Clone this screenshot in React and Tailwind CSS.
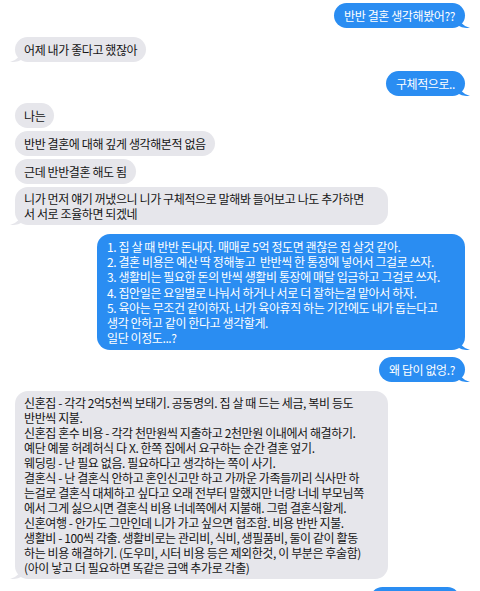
import React from "react";

const font = { fontFamily: '"Noto Sans CJK KR", "Noto Sans", sans-serif' };

function TailRight({ color }) {
  return (
    <svg className="absolute right-[-5px] bottom-0" width="12" height="13" viewBox="0 0 12 13">
      <path d="M0 0 Q1 10 12 13 Q5 13.5 0 10.5 Z" fill={color} />
    </svg>
  );
}

function TailLeft({ color }) {
  return (
    <svg className="absolute left-[-5px] bottom-0" width="12" height="13" viewBox="0 0 12 13">
      <path d="M12 0 Q11 10 0 13 Q7 13.5 12 10.5 Z" fill={color} />
    </svg>
  );
}

function Me({ children, tail = true, className = "" }) {
  return (
    <div className="flex justify-end">
      <div className={"relative rounded-[13px] bg-[#2a8df2] text-white px-[10px] whitespace-nowrap " + className}>
        {children}
        {tail && <TailRight color="#2a8df2" />}
      </div>
    </div>
  );
}

function Them({ children, tail = false, className = "" }) {
  return (
    <div className="flex justify-start">
      <div className={"relative rounded-[13px] bg-[#e6e6eb] text-[#151515] px-[9px] whitespace-nowrap " + className}>
        {children}
        {tail && <TailLeft color="#e6e6eb" />}
      </div>
    </div>
  );
}

export default function App() {
  return (
    <div
      className="w-[480px] h-[591px] overflow-hidden bg-white pl-[15px] pr-[15px] pt-[3px] text-[12px] tracking-[-0.4px] flex flex-col"
      style={font}
    >
      <Me className="py-[5px] leading-[15px]">반반 결혼 생각해봤어??</Me>
      <div className="mt-[9px]">
        <Them tail className="py-[5px] leading-[15px]">어제 내가 좋다고 했잖아</Them>
      </div>
      <div className="mt-[9px]">
        <Me className="py-[5px] leading-[15px]">구체적으로..</Me>
      </div>
      <div className="mt-[7px] flex flex-col gap-[3px]">
        <Them className="py-[5px] leading-[15px]">나는</Them>
        <Them className="py-[5px] leading-[15px]">반반 결혼에 대해 깊게 생각해본적 없음</Them>
        <Them className="py-[5px] leading-[15px]">근데 반반결혼 해도 됨</Them>
        <Them tail className="py-[4px] leading-[15px] w-[373px]">
          니가 먼저 얘기 꺼냈으니 니가 구체적으로 말해봐 들어보고 나도 추가하면
          <br />서 서로 조율하면 되겠네
        </Them>
      </div>
      <div className="mt-[9px]">
        <Me className="py-[5px] leading-[15.2px] w-[368px]">
          1. 집 살 때 반반 돈내자. 매매로 5억 정도면 괜찮은 집 살것 같아.
          <br />2. 결혼 비용은 예산 딱 정해놓고&nbsp; 반반씩 한 통장에 넣어서 그걸로 쓰자.
          <br />3. 생활비는 필요한 돈의 반씩 생활비 통장에 매달 입금하고 그걸로 쓰자.
          <br />4. 집안일은 요일별로 나눠서 하거나 서로 더 잘하는걸 맡아서 하자.
          <br />5. 육아는 무조건 같이하자. 너가 육아휴직 하는 기간에도 내가 돕는다고
          <br />생각 안하고 같이 한다고 생각할게.
          <br />일단 이정도...?
        </Me>
      </div>
      <div className="mt-[7px]">
        <Me className="py-[5px] leading-[15px]">왜 답이 없엉.?</Me>
      </div>
      <div className="mt-[9px]">
        <Them tail className="py-[4px] leading-[15px] w-[373px]">
          신혼집 - 각각 2억5천씩 보태기. 공동명의. 집 살 때 드는 세금, 복비 등도
          <br />반반씩 지불.
          <br />신혼집 혼수 비용 - 각각 천만원씩 지출하고 2천만원 이내에서 해결하기.
          <br />예단 예물 허례허식 다 X. 한쪽 집에서 요구하는 순간 결혼 엎기.
          <br />웨딩링 - 난 필요 없음. 필요하다고 생각하는 쪽이 사기.
          <br />결혼식 - 난 결혼식 안하고 혼인신고만 하고 가까운 가족들끼리 식사만 하
          <br />는걸로 결혼식 대체하고 싶다고 오래 전부터 말했지만 너랑 너네 부모님쪽
          <br />에서 그게 싫으시면 결혼식 비용 너네쪽에서 지불해. 그럼 결혼식할게.
          <br />신혼여행 - 안가도 그만인데 니가 가고 싶으면 협조함. 비용 반반 지불.
          <br />생활비 - 100씩 각출. 생활비로는 관리비, 식비, 생필품비, 둘이 같이 활동
          <br />하는 비용 해결하기. (도우미, 시터 비용 등은 제외한것, 이 부분은 후술함)
          <br />(아이 낳고 더 필요하면 똑같은 금액 추가로 각출)
        </Them>
      </div>
      <div className="mt-[8px] pr-[5px]">
        <Me tail={false} className="py-[5px] leading-[15px] w-[90px]">
          &nbsp;
        </Me>
      </div>
    </div>
  );
}
